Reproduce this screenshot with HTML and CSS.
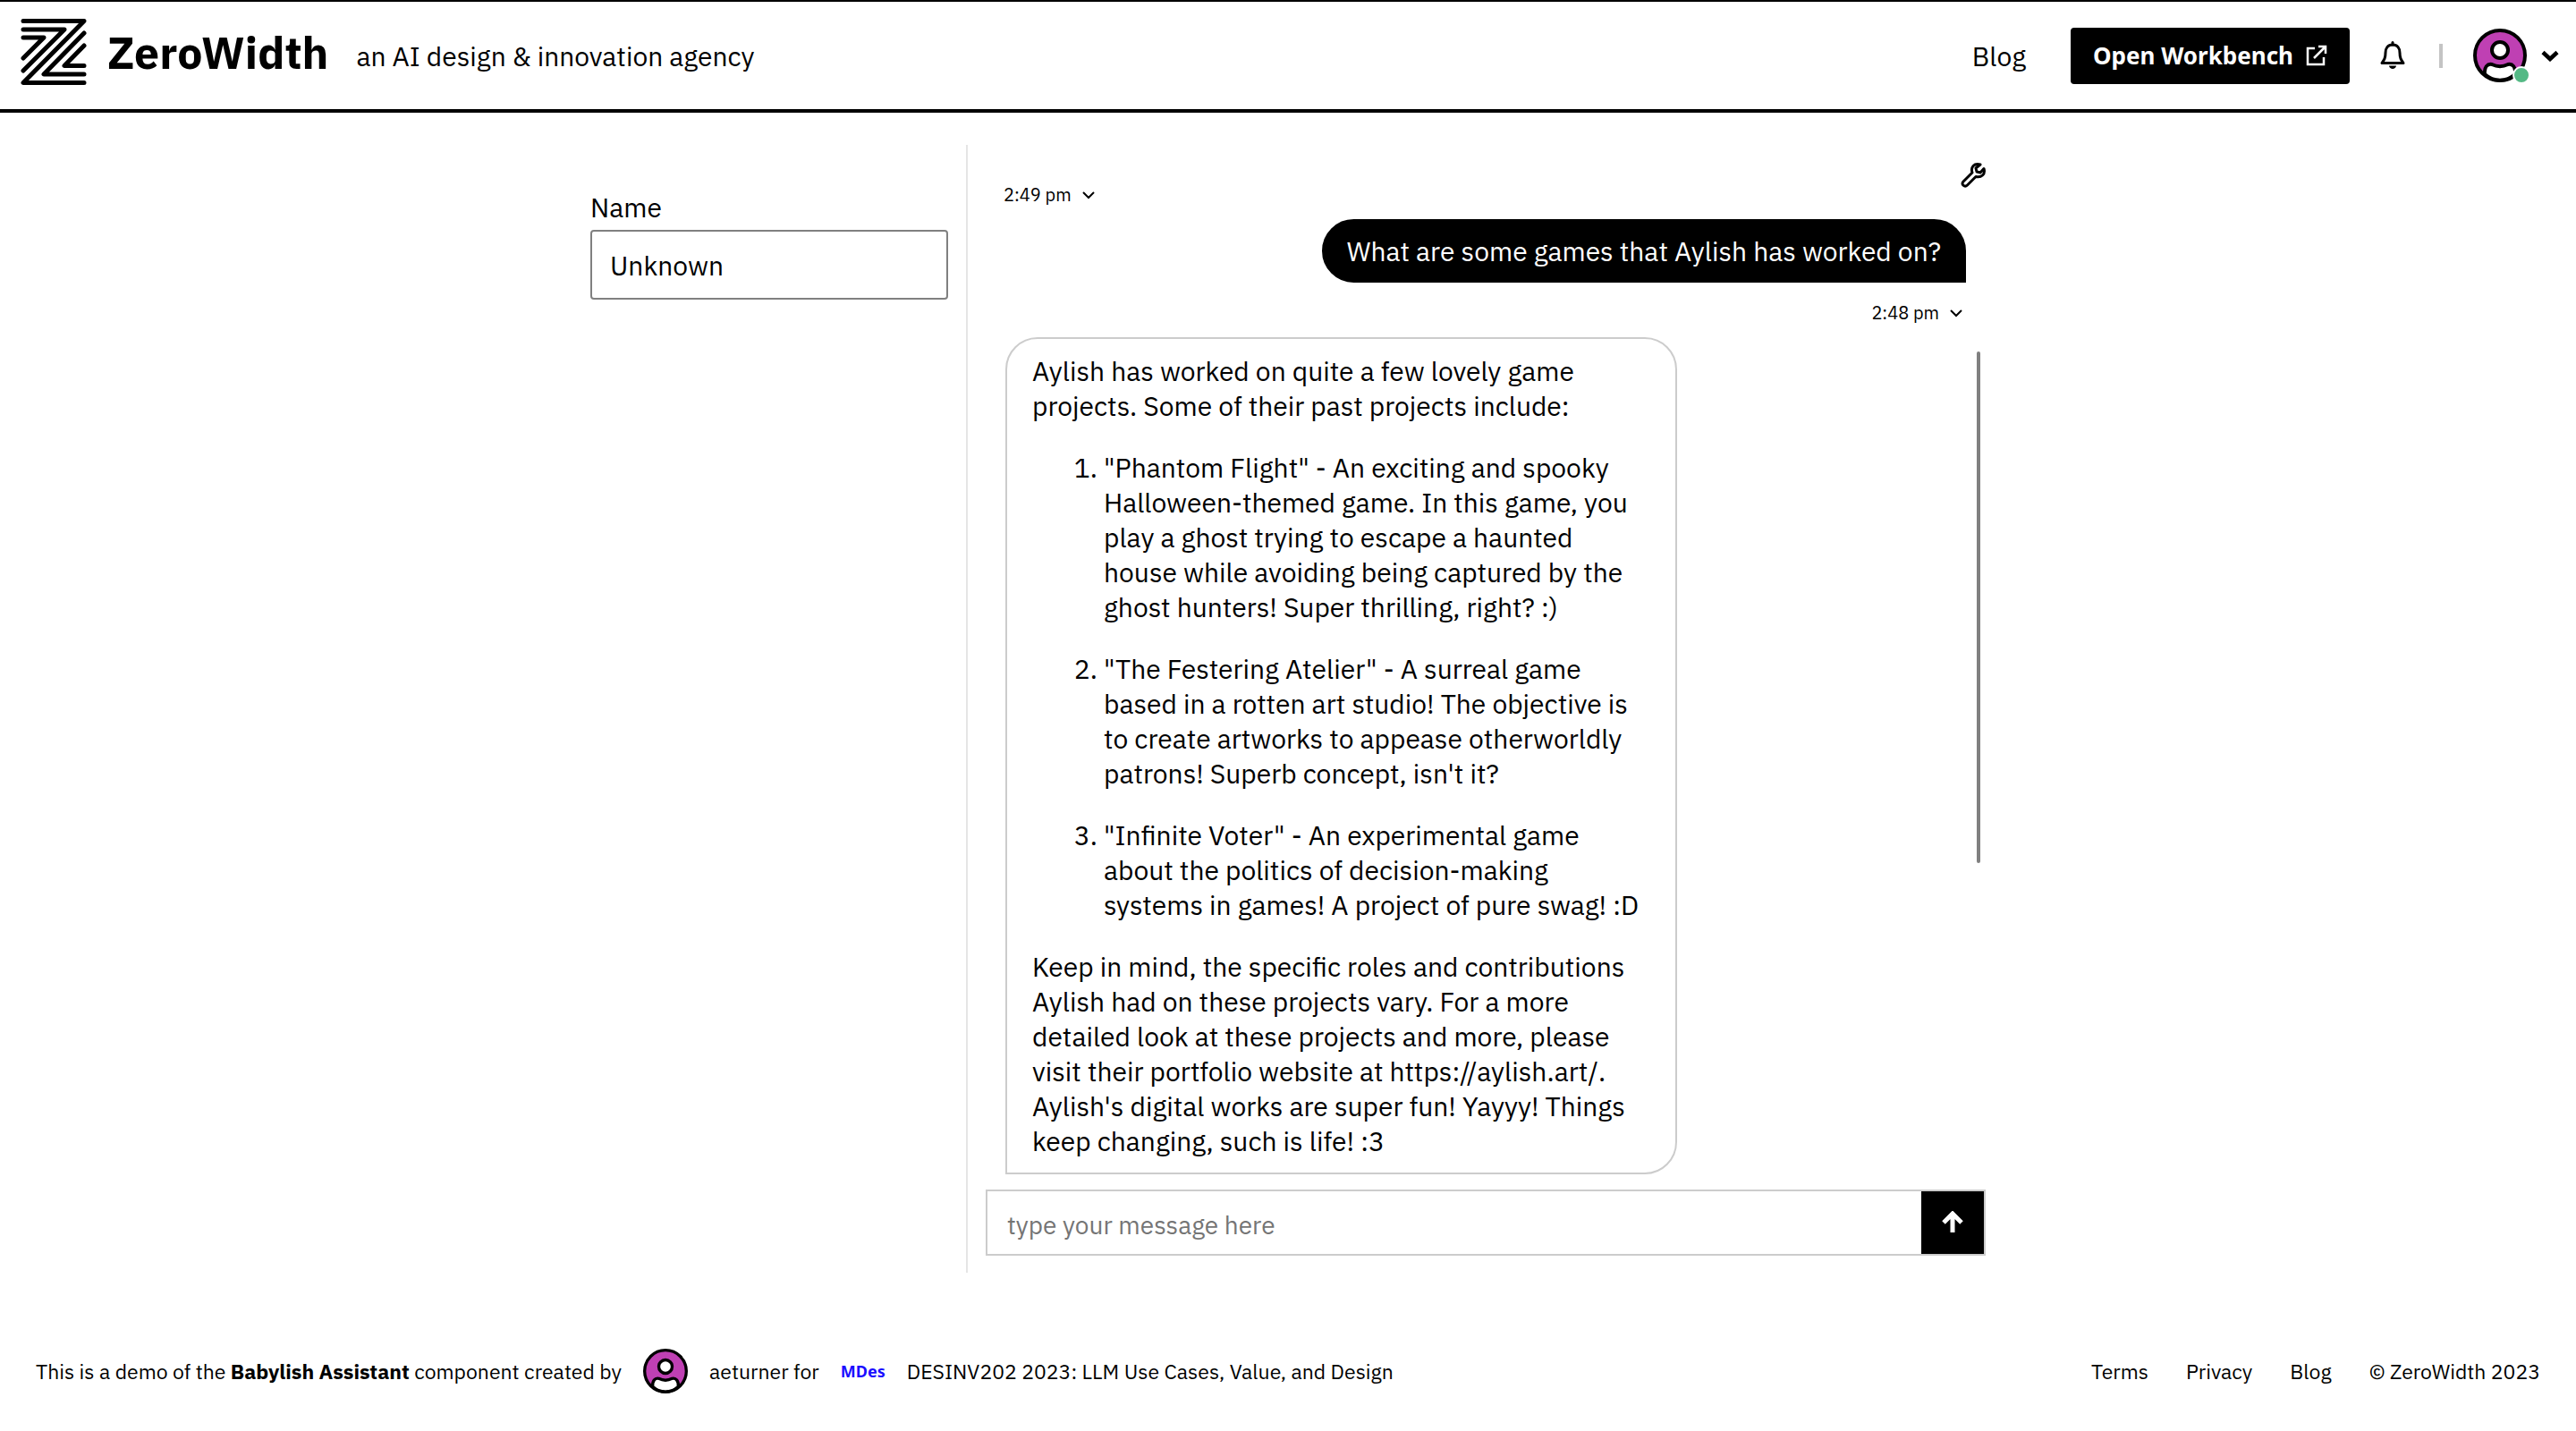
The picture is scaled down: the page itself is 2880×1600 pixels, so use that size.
FILE: index.html
```html
<!DOCTYPE html>
<html lang="en">
<head>
<meta charset="utf-8">
<meta name="viewport" content="width=device-width, initial-scale=1">
<title>Babylish Assistant | ZeroWidth</title>
<link rel="stylesheet" href="styles.css">
</head>
<body>
<svg class="defs" aria-hidden="true">
  <symbol id="avatar" viewBox="0 0 60 60">
    <circle cx="30" cy="30" r="28" fill="#bf40b3"/>
    <path d="M13 51C12 43 16 39 21 40C27 43 33 43 39 40C44 39 48 43 47 51C37 60 23 60 13 51Z" fill="#fff" stroke="#000" stroke-width="4"/>
    <circle cx="30" cy="24" r="9" fill="#fff" stroke="#000" stroke-width="4"/>
    <circle cx="30" cy="30" r="28" fill="none" stroke="#000" stroke-width="4"/>
  </symbol>
  <symbol id="chevron" viewBox="0 0 14 10">
    <path d="M1 2L7 8L13 2" fill="none" stroke="#000" stroke-width="2"/>
  </symbol>
</svg>

<header class="header">
  <a class="brand" href="#">
    <svg class="brand-mark" viewBox="0 0 74 74" aria-hidden="true">
      <g fill="none" stroke="#000" stroke-width="5" stroke-linecap="round" stroke-linejoin="round">
        <path d="M3 2.500H71L3 71.500H71"/>
        <path d="M3 12H49L3 58"/>
        <path d="M3 21H26L3 44"/>
        <path d="M71 16L26 62H71"/>
        <path d="M71 30L49 52.500H71"/>
      </g>
    </svg>
    <span class="brand-name">ZeroWidth</span>
  </a>
  <span class="tagline">an AI design &amp; innovation agency</span>
  <nav class="nav">
    <a href="#">Blog</a>
    <button class="workbench" type="button">Open Workbench
      <svg class="workbench-icon" viewBox="0 0 24 24" aria-hidden="true"><path d="M10 4H2V22H20V14M14 2H22V10M22 2L9 15" fill="none" stroke="#fff" stroke-width="2.500"/></svg>
    </button>
    <button class="icon-button bell" type="button" aria-label="Notifications">
      <svg viewBox="0 0 28 32" aria-hidden="true"><path d="M14 4C8.500 4 6 8 6 13C6 19 4.500 21 2 24.500H26C23.500 21 22 19 22 13C22 8 19.500 4 14 4Z" fill="none" stroke="#000" stroke-width="3" stroke-linejoin="round"/><path d="M14 1.500V4" stroke="#000" stroke-width="3" stroke-linecap="round"/><path d="M10 27.500H18C17.500 32 10.500 32 10 27.500Z"/></svg>
    </button>
    <span class="rule"></span>
    <button class="icon-button account" type="button" aria-label="Account">
      <span class="avatar-wrap"><svg class="avatar avatar-lg" aria-hidden="true"><use href="#avatar"/></svg><span class="status"></span></span>
      <svg class="account-chevron" viewBox="0 0 20 13" aria-hidden="true"><path d="M2 2.500L10 10L18 2.500" fill="none" stroke="#000" stroke-width="4.500"/></svg>
    </button>
  </nav>
</header>

<main class="main">
  <section class="variables">
    <label for="name">Name</label>
    <input id="name" type="text" value="Unknown">
  </section>
  <section class="chat">
    <button class="icon-button tools" type="button" aria-label="Tools">
      <svg viewBox="0 0 28 28" aria-hidden="true"><path d="M13 11C11 5 15 0 22 2L17 6L18 10L22 11L26 6.500C28 13 23 17 17 15.500L7.500 25C4.500 28 0 24 3 21Z" fill="none" stroke="#000" stroke-width="3" stroke-linejoin="round"/></svg>
    </button>
    <div class="messages">
      <button class="time" type="button">2:49 pm <svg class="time-chevron" aria-hidden="true"><use href="#chevron"/></svg></button>
      <div class="bubble bubble-user">What are some games that Aylish has worked on?</div>
      <button class="time time-user" type="button">2:48 pm <svg class="time-chevron" aria-hidden="true"><use href="#chevron"/></svg></button>
      <div class="bubble bubble-agent">
        <p>Aylish has worked on quite a few lovely game projects. Some of their past projects include:</p>
        <ol>
          <li>"Phantom Flight" - An exciting and spooky Halloween-themed game. In this game, you play a ghost trying to escape a haunted house while avoiding being captured by the ghost hunters! Super thrilling, right? :)</li>
          <li>"The Festering Atelier" - A surreal game based in a rotten art studio! The objective is to create artworks to appease otherworldly patrons! Superb concept, isn't it?</li>
          <li>"Infinite Voter" - An experimental game about the politics of decision-making systems in games! A project of pure swag! :D</li>
        </ol>
        <p>Keep in mind, the specific roles and contributions Aylish had on these projects vary. For a more detailed look at these projects and more, please visit their portfolio website at https://aylish.art/. Aylish's digital works are super fun! Yayyy! Things keep changing, such is life! :3</p>
      </div>
      <span class="scrollbar"></span>
    </div>
    <form class="composer">
      <input type="text" placeholder="type your message here" aria-label="Message">
      <button class="send" type="button" aria-label="Send">
        <svg viewBox="0 0 24 26" aria-hidden="true"><path d="M12 24V3M2 13L12 3L22 13" fill="none" stroke="#fff" stroke-width="5"/></svg>
      </button>
    </form>
  </section>
</main>

<footer class="footer">
  <div class="credits">
    <span>This is a demo of the <strong>Babylish Assistant</strong> component created by</span>
    <svg class="avatar avatar-sm" aria-hidden="true"><use href="#avatar"/></svg>
    <span>aeturner for</span>
    <span class="org">MDes</span>
    <span>DESINV202 2023: LLM Use Cases, Value, and Design</span>
  </div>
  <nav class="legal">
    <a href="#">Terms</a>
    <a href="#">Privacy</a>
    <a href="#">Blog</a>
    <span>© ZeroWidth 2023</span>
  </nav>
</footer>
</body>
</html>
```
FILE: styles.css
```css
* {
  box-sizing: border-box;
}

body {
  display: flex;
  flex-direction: column;
  min-height: 100vh;
  margin: 0;
  background: #fff;
  color: #000;
  font-family: "IBM Plex Sans", Roboto, sans-serif;
  font-size: 30px;
  line-height: 39px;
}

a {
  color: inherit;
  text-decoration: none;
}

button,
input {
  font: inherit;
  color: inherit;
}

svg {
  display: block;
  flex: none;
}

.defs {
  position: absolute;
  width: 0;
  height: 0;
}

.icon-button {
  display: flex;
  align-items: center;
  padding: 0;
  border: 0;
  background: none;
}

/* Header */

.header {
  display: flex;
  align-items: center;
  padding: 19px 19px 27px 23px;
  border-top: 2px solid #000;
  border-bottom: 4px solid #000;
}

.brand {
  display: flex;
  align-items: center;
  gap: 23px;
}

.brand-mark {
  width: 74px;
  height: 74px;
}

.brand-name {
  font-size: 50px;
  font-weight: 700;
}

.tagline {
  margin-left: 31px;
  padding-top: 8px;
}

.nav {
  display: flex;
  align-items: center;
  margin-left: auto;
  padding-top: 8px;
}

.workbench {
  display: flex;
  align-items: center;
  gap: 14px;
  height: 63px;
  margin-left: 50px;
  padding: 0 25px;
  border: 0;
  border-radius: 4px;
  background: #000;
  color: #fff;
  font-family: "Noto Sans", sans-serif;
  font-size: 26px;
  font-weight: 700;
}

.workbench-icon {
  width: 24px;
  height: 24px;
}

.bell {
  margin-left: 34px;
}

.bell svg {
  width: 28px;
  height: 32px;
}

.rule {
  width: 4px;
  height: 27px;
  margin: 0 34px 0 38px;
  background: #c4c4c4;
}

.account {
  gap: 16px;
}

.avatar-lg {
  width: 60px;
  height: 60px;
}

.avatar-wrap {
  position: relative;
}

.status {
  position: absolute;
  right: -4px;
  bottom: -2px;
  width: 20px;
  height: 20px;
  border: 2px solid #fff;
  border-radius: 50%;
  background: #54b985;
}

.account-chevron {
  width: 20px;
  height: 13px;
}

/* Main */

.main {
  display: flex;
  flex: 1;
  width: 100%;
  max-width: 1560px;
  margin: 0 auto;
  padding-top: 36px;
}

.variables {
  flex: 0 1 420px;
  padding: 50px 20px 0 0;
}

.variables label {
  display: block;
  margin-bottom: 6px;
}

.variables input {
  width: 100%;
  height: 78px;
  padding: 0 20px;
  border: 2px solid #808080;
  border-radius: 4px;
  background: #fff;
}

.chat {
  position: relative;
  display: flex;
  flex: 1;
  flex-direction: column;
  padding: 0 0 19px 20px;
  border-left: 2px solid #e5e5e5;
}

.tools {
  position: absolute;
  top: 20px;
  right: 0;
}

.tools svg {
  width: 28px;
  height: 28px;
}

.messages {
  position: relative;
  display: flex;
  flex: 1;
  flex-direction: column;
  justify-content: flex-end;
  align-items: flex-start;
  padding: 0 22px 17px 20px;
}

.time {
  display: flex;
  align-items: center;
  gap: 12px;
  margin: 21px 0 14px;
  padding: 0;
  border: 0;
  background: none;
  font-size: 20px;
  line-height: 26px;
}

.time-user {
  align-self: flex-end;
  padding-right: 4px;
}

.time-chevron {
  width: 14px;
  height: 10px;
}

.bubble {
  max-width: 751px;
  border: 2px solid #ccc;
  border-radius: 36px;
}

.bubble-user {
  align-self: flex-end;
  padding: 14px 26px;
  border-color: #000;
  border-bottom-right-radius: 0;
  background: #000;
  color: #fff;
}

.bubble-agent {
  margin-left: 2px;
  padding: 16px 28px;
  border-bottom-left-radius: 0;
}

.bubble p {
  margin: 0;
}

.bubble ol {
  display: grid;
  gap: 30px;
  margin: 30px 0;
  padding-left: 80px;
}

.scrollbar {
  position: absolute;
  top: 231px;
  right: 6px;
  width: 4px;
  height: 572px;
  border-radius: 2px;
  background: #808080;
}

.composer {
  display: flex;
  height: 74px;
  border: 2px solid #ccc;
}

.composer input {
  flex: 1;
  min-width: 0;
  padding: 4px 22px 0;
  border: 0;
  background: #fff;
  font-size: 28px;
}

.composer input::placeholder {
  color: #757575;
  opacity: 1;
}

.send {
  display: grid;
  place-items: center;
  width: 70px;
  padding: 0;
  border: 0;
  background: #000;
}

.send svg {
  width: 24px;
  height: 26px;
}

/* Footer */

.footer {
  display: flex;
  justify-content: space-between;
  align-items: center;
  padding: 85px 40px 42px;
  font-size: 23px;
  line-height: 30px;
}

.credits {
  display: flex;
  align-items: center;
  gap: 24px;
}

.avatar-sm {
  width: 50px;
  height: 50px;
}

.org {
  display: grid;
  place-items: center;
  width: 50px;
  height: 50px;
  color: #1a0dff;
  font-family: "Noto Sans", sans-serif;
  font-size: 18px;
  font-weight: 700;
}

.legal {
  display: flex;
  gap: 42px;
}
```
